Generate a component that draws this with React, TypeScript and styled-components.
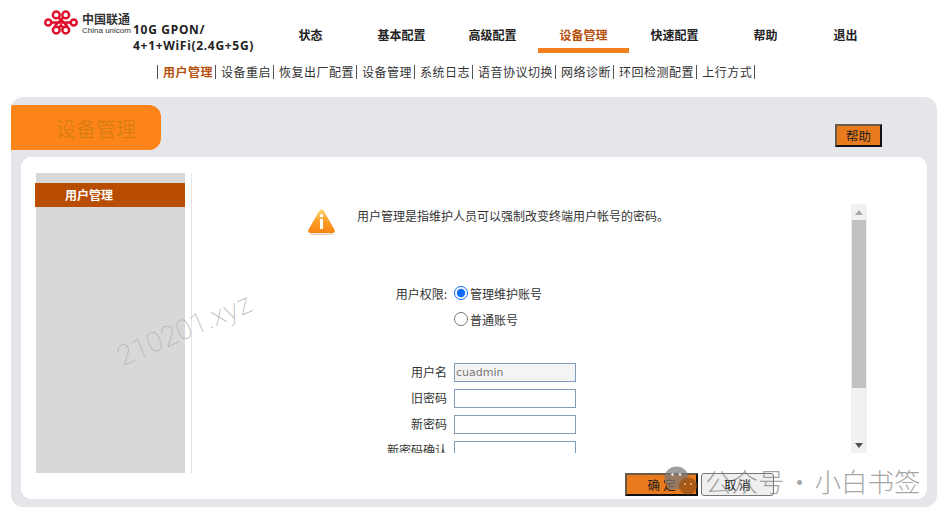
import React from "react";
import styled, { createGlobalStyle } from "styled-components";

const GlobalStyle = createGlobalStyle`
  html, body {
    margin: 0;
    padding: 0;
    background: #fff;
  }
  body {
    font-family: "Noto Sans CJK SC", "Noto Sans", sans-serif;
    font-size: 12px;
    color: #222;
  }
  * {
    box-sizing: border-box;
  }
`;

const Page = styled.div`
  position: relative;
  width: 950px;
  height: 519px;
  overflow: hidden;
`;

const Header = styled.header`
  display: flex;
  height: 57px;
  padding-left: 44px;
`;

const Logo = styled.div`
  display: flex;
  align-items: flex-start;
  width: 89px;
  padding-top: 10px;
  gap: 4px;
  flex: none;

  svg {
    flex: none;
  }
`;

const LogoText = styled.div`
  display: flex;
  flex-direction: column;
  padding-top: 1px;
  color: #333;
`;

const LogoCn = styled.span`
  font-size: 12px;
  line-height: 15px;
  font-weight: 700;
  white-space: nowrap;
`;

const LogoEn = styled.span`
  font-family: "Liberation Sans", sans-serif;
  font-size: 8px;
  line-height: 10px;
  white-space: nowrap;
`;

const Model = styled.div`
  width: 132px;
  flex: none;
  padding-top: 22px;
  font-family: "Noto Sans", sans-serif;
  font-weight: 700;
  font-size: 12px;
  line-height: 16px;
  letter-spacing: 0.7px;
  color: #222;
  white-space: nowrap;
`;

const Nav = styled.nav`
  display: flex;
  padding-top: 24px;
`;

const NavItem = styled.div<{ $active?: boolean; $width?: number }>`
  width: ${(p) => p.$width ?? 91}px;
  height: 29px;
  line-height: 22px;
  text-align: center;
  font-weight: 700;
  font-size: 12px;
  color: ${(p) => (p.$active ? "#b5500c" : "#222")};
  border-bottom: 5px solid ${(p) => (p.$active ? "#f47f1f" : "transparent")};
`;

const SubNav = styled.div`
  display: flex;
  height: 40px;
  padding: 8px 0 0 157px;
  align-items: flex-start;
`;

const SubLink = styled.a<{ $active?: boolean }>`
  height: 14px;
  line-height: 14px;
  padding: 0 2px 0 5px;
  border-left: 1px solid #555;
  white-space: nowrap;
  font-size: 12px;
  letter-spacing: 0.5px;
  font-weight: ${(p) => (p.$active ? 700 : 400)};
  color: ${(p) => (p.$active ? "#b5500c" : "#333")};
`;

const SubEnd = styled.span`
  width: 1px;
  height: 14px;
  background: #555;
`;

const Panel = styled.main`
  width: 926px;
  height: 410px;
  margin-left: 11px;
  background: #e4e6e9;
  border-radius: 12px;
  display: flex;
  flex-direction: column;
  overflow: hidden;
`;

const PanelHead = styled.div`
  height: 60px;
  flex: none;
  display: flex;
  justify-content: space-between;
`;

const TitleTab = styled.div`
  width: 150px;
  height: 45px;
  margin-top: 8px;
  padding-left: 45px;
  background: #fd8418;
  border-radius: 0 12px 12px 0;
  font-size: 20px;
  font-weight: 300;
  line-height: 48px;
  color: #cf7c10;
`;

const OrangeButton = styled.button<{ $width: number }>`
  width: ${(p) => p.$width}px;
  height: 23px;
  padding: 0;
  background: #ea7b1c;
  border: 2px solid;
  border-color: #6a5a48 #111 #111 #6a5a48;
  font-family: inherit;
  font-size: 12.5px;
  line-height: 18px;
  color: #222;
`;

const HelpSlot = styled.div`
  margin: 27px 55px 0 0;
`;

const Inner = styled.div`
  flex: 1;
  margin: 0 10px 8px;
  background: #fff;
  border-radius: 10px;
  display: flex;
  padding-top: 16px;
`;

const Sidebar = styled.aside`
  width: 150px;
  height: 300px;
  margin-left: 14px;
  padding-top: 10px;
  flex: none;
  background: linear-gradient(to right, #fff 1px, #d8d8d8 1px);
`;

const SideItem = styled.div`
  height: 24px;
  line-height: 24px;
  padding-left: 30px;
  background: #b84c00;
  color: #fff;
  font-weight: 700;
  font-size: 12px;
`;

const Divider = styled.div`
  width: 1px;
  height: 300px;
  margin-left: 6px;
  background: #e6e6e6;
  flex: none;
`;

const Content = styled.section`
  flex: 1;
  display: flex;
  flex-direction: column;
  padding-top: 31px;
`;

const ScrollArea = styled.div`
  display: flex;
  height: 249px;
  width: 675px;
`;

const ScrollBody = styled.div`
  flex: 1;
  overflow: hidden;
`;

const Notice = styled.div`
  display: flex;
  padding: 4px 0 0 115px;
  gap: 21px;
  height: 32px;
`;

const NoticeText = styled.p`
  margin: 0;
  font-size: 12px;
  line-height: 16px;
  color: #333;
  white-space: nowrap;
`;

const FormGrid = styled.div`
  margin-top: 45px;
  display: flex;
  flex-direction: column;
`;

const Row = styled.label<{ $top?: number }>`
  display: grid;
  grid-template-columns: 255px 1fr;
  column-gap: 7px;
  height: 26px;
  margin-top: ${(p) => p.$top ?? 0}px;
  align-items: center;
  font-size: 12px;
  color: #333;
`;

const RowLabel = styled.span`
  text-align: right;
  white-space: nowrap;
  padding-bottom: 2px;
`;

const RadioWrap = styled.span`
  display: flex;
  align-items: center;
  gap: 2px;
  padding-bottom: 2px;
`;

const Radio = styled.input.attrs({ type: "radio" })`
  width: 14px;
  height: 14px;
  margin: 0;
  accent-color: #0a6cf5;
`;

const TextBox = styled.input<{ $filled?: boolean }>`
  width: 122px;
  height: 19px;
  padding: 0 1px;
  border: 1px solid #7f9db9;
  border-radius: 0;
  outline: none;
  background: ${(p) => (p.$filled ? "#f4f4f4" : "#fff")};
  font-family: "DejaVu Sans", sans-serif;
  font-size: 11px;
  color: #777;
`;

const ScrollTrack = styled.div`
  width: 16px;
  height: 249px;
  flex: none;
  background: #f1f1f1;
  display: flex;
  flex-direction: column;
`;

const ScrollArrow = styled.div`
  height: 16px;
  flex: none;
  display: flex;
  align-items: center;
  justify-content: center;
`;

const ScrollThumb = styled.div`
  height: 168px;
  margin: 0 1px;
  background: #c1c1c1;
  flex: none;
`;

const ScrollRest = styled.div`
  flex: 1;
`;

const Footer = styled.div`
  display: flex;
  gap: 3px;
  padding: 20px 0 0 433px;
`;

const GrayButton = styled.button`
  width: 73px;
  height: 23px;
  padding: 0;
  background: #efefef;
  border: 1px solid #767676;
  border-radius: 3px;
  font-family: inherit;
  font-size: 12px;
  color: #111;
`;

const StampText = styled.div`
  position: absolute;
  left: 113px;
  top: 313px;
  font-family: "Roboto", sans-serif;
  font-size: 28px;
  line-height: 34px;
  font-weight: 100;
  letter-spacing: 0.5px;
  color: #b4b4b4;
  transform: rotate(-23deg);
  pointer-events: none;
`;

const Brand = styled.div`
  position: absolute;
  left: 664px;
  top: 466px;
  display: flex;
  align-items: center;
  color: rgba(130, 130, 130, 0.72);
  font-size: 26.5px;
  line-height: 30px;
  font-weight: 300;
  white-space: nowrap;
  pointer-events: none;

  svg {
    flex: none;
    margin-right: 8px;
  }
`;

const BrandDot = styled.span`
  width: 30px;
  text-align: center;
`;

const subLinks = [
  "用户管理",
  "设备重启",
  "恢复出厂配置",
  "设备管理",
  "系统日志",
  "语音协议切换",
  "网络诊断",
  "环回检测配置",
  "上行方式",
];

const UnicomKnot = () => (
  <svg width="34" height="25" viewBox="0 0 36 26" fill="none" stroke="#e0102c" strokeWidth="2.6">
    <circle cx="4.5" cy="13" r="3.2" />
    <circle cx="31.5" cy="13" r="3.2" />
    <circle cx="13" cy="5" r="3.6" />
    <circle cx="23" cy="5" r="3.6" />
    <circle cx="13" cy="21" r="3.6" />
    <circle cx="23" cy="21" r="3.6" />
    <path d="M8 13h20M15.5 7.5 25 17M20.5 7.5 11 17M15.5 18.5 18 16l2.5 2.5" />
  </svg>
);

const WarningIcon = () => (
  <svg width="29" height="28" viewBox="0 0 29 28">
    <defs>
      <linearGradient id="warn" x1="0" y1="0" x2="0" y2="1">
        <stop offset="0" stopColor="#fdd36a" />
        <stop offset="0.55" stopColor="#fb9c24" />
        <stop offset="1" stopColor="#f58412" />
      </linearGradient>
    </defs>
    <path
      d="M14.5 1.5c1 0 1.8.6 2.4 1.6l10.6 18.6c.9 1.7.2 3.3-1.9 3.3H3.4c-2.1 0-2.8-1.6-1.9-3.3L12.1 3.1c.6-1 1.4-1.6 2.4-1.6z"
      fill="url(#warn)"
    />
    <path d="M3 26.2h23" stroke="#e8d6c0" strokeWidth="1.4" />
    <rect x="13" y="11" width="3" height="10" fill="#fff" />
    <circle cx="14.5" cy="7.8" r="1.8" fill="#fff" />
  </svg>
);

const WeChatIcon = () => (
  <svg width="33" height="30" viewBox="0 0 33 30">
    <ellipse cx="12.5" cy="12" rx="12" ry="11.5" fill="rgba(120,120,120,0.72)" />
    <path d="M5 20l-1 5 6-3z" fill="rgba(120,120,120,0.72)" />
    <ellipse cx="24" cy="20" rx="9" ry="8.5" fill="rgba(160,85,20,0.85)" />
    <circle cx="8.5" cy="8.5" r="1.4" fill="#ddd" />
    <circle cx="16" cy="8.5" r="1.4" fill="#ddd" />
    <circle cx="21" cy="18" r="1.1" fill="#e8b070" />
    <circle cx="27" cy="18" r="1.1" fill="#e8b070" />
  </svg>
);

const ArrowUp = () => (
  <svg width="8" height="5" viewBox="0 0 8 5">
    <path d="M0 5 4 0l4 5z" fill="#a8a8a8" />
  </svg>
);

const ArrowDown = () => (
  <svg width="8" height="5" viewBox="0 0 8 5">
    <path d="M0 0h8L4 5z" fill="#505050" />
  </svg>
);

const App = () => (
  <Page>
    <GlobalStyle />
    <Header>
      <Logo>
        <UnicomKnot />
        <LogoText>
          <LogoCn>中国联通</LogoCn>
          <LogoEn>China unicom</LogoEn>
        </LogoText>
      </Logo>
      <Model>
        10G GPON/
        <br />
        4+1+WiFi(2.4G+5G)
      </Model>
      <Nav>
        <NavItem>状态</NavItem>
        <NavItem>基本配置</NavItem>
        <NavItem>高级配置</NavItem>
        <NavItem $active>设备管理</NavItem>
        <NavItem>快速配置</NavItem>
        <NavItem>帮助</NavItem>
        <NavItem $width={69}>退出</NavItem>
      </Nav>
    </Header>
    <SubNav>
      {subLinks.map((text, i) => (
        <SubLink key={i} $active={i === 0}>
          {text}
        </SubLink>
      ))}
      <SubEnd />
    </SubNav>
    <Panel>
      <PanelHead>
        <TitleTab>设备管理</TitleTab>
        <HelpSlot>
          <OrangeButton $width={47}>帮助</OrangeButton>
        </HelpSlot>
      </PanelHead>
      <Inner>
        <Sidebar>
          <SideItem>用户管理</SideItem>
        </Sidebar>
        <Divider />
        <Content>
          <ScrollArea>
            <ScrollBody>
              <Notice>
                <WarningIcon />
                <NoticeText>用户管理是指维护人员可以强制改变终端用户帐号的密码。</NoticeText>
              </Notice>
              <FormGrid>
                <Row>
                  <RowLabel>用户权限:</RowLabel>
                  <RadioWrap>
                    <Radio name="role" defaultChecked />
                    管理维护账号
                  </RadioWrap>
                </Row>
                <Row>
                  <span />
                  <RadioWrap>
                    <Radio name="role" />
                    普通账号
                  </RadioWrap>
                </Row>
                <Row $top={26}>
                  <RowLabel>用户名</RowLabel>
                  <TextBox $filled readOnly value="cuadmin" />
                </Row>
                <Row>
                  <RowLabel>旧密码</RowLabel>
                  <TextBox type="password" />
                </Row>
                <Row>
                  <RowLabel>新密码</RowLabel>
                  <TextBox type="password" />
                </Row>
                <Row>
                  <RowLabel>新密码确认</RowLabel>
                  <TextBox type="password" />
                </Row>
              </FormGrid>
            </ScrollBody>
            <ScrollTrack>
              <ScrollArrow>
                <ArrowUp />
              </ScrollArrow>
              <ScrollThumb />
              <ScrollRest />
              <ScrollArrow>
                <ArrowDown />
              </ScrollArrow>
            </ScrollTrack>
          </ScrollArea>
          <Footer>
            <OrangeButton $width={73}>确 定</OrangeButton>
            <GrayButton>取 消</GrayButton>
          </Footer>
        </Content>
      </Inner>
    </Panel>
    <StampText>210201.xyz</StampText>
    <Brand>
      <WeChatIcon />
      <span>公众号</span>
      <BrandDot>·</BrandDot>
      <span>小白书签</span>
    </Brand>
  </Page>
);

export default App;
